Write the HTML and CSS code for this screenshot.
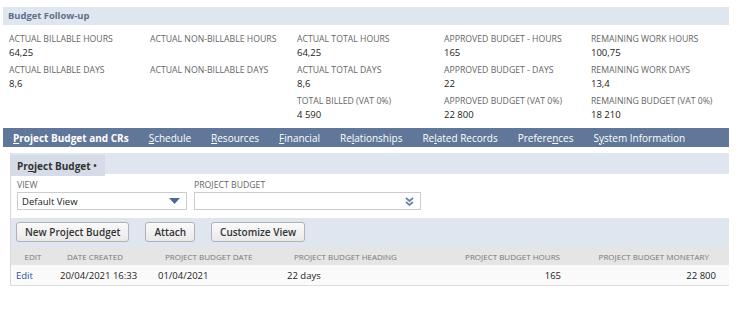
FILE: index.html
```html
<!DOCTYPE html>
<html lang="en">
<head>
  <meta charset="UTF-8" />
  <title>Project - Budget Follow-up</title>
  <link rel="stylesheet" href="styles.css">
</head>
<body>
  <div class="section-head">Budget Follow-up</div>

  <div class="fields">
    <div class="col first">
      <div class="field"><div class="label">Actual billable hours</div><div class="value">64,25</div></div>
      <div class="field"><div class="label">Actual billable days</div><div class="value">8,6</div></div>
    </div>
    <div class="col">
      <div class="field"><div class="label">Actual non-billable hours</div><div class="value">&nbsp;</div></div>
      <div class="field"><div class="label">Actual non-billable days</div><div class="value">&nbsp;</div></div>
    </div>
    <div class="col">
      <div class="field"><div class="label">Actual total hours</div><div class="value">64,25</div></div>
      <div class="field"><div class="label">Actual total days</div><div class="value">8,6</div></div>
      <div class="field"><div class="label">Total billed (VAT 0%)</div><div class="value">4 590</div></div>
    </div>
    <div class="col">
      <div class="field"><div class="label">Approved budget - hours</div><div class="value">165</div></div>
      <div class="field"><div class="label">Approved budget - days</div><div class="value">22</div></div>
      <div class="field"><div class="label">Approved budget (VAT 0%)</div><div class="value">22 800</div></div>
    </div>
    <div class="col">
      <div class="field"><div class="label">Remaining work hours</div><div class="value">100,75</div></div>
      <div class="field"><div class="label">Remaining work days</div><div class="value">13,4</div></div>
      <div class="field"><div class="label">Remaining budget (VAT 0%)</div><div class="value">18 210</div></div>
    </div>
  </div>

  <div class="tabs">
    <span class="tab active"><u>P</u>roject Budget and CRs</span>
    <span class="tab"><u>S</u>chedule</span>
    <span class="tab"><u>R</u>esources</span>
    <span class="tab"><u>F</u>inancial</span>
    <span class="tab">Re<u>l</u>ationships</span>
    <span class="tab">Re<u>l</u>ated Records</span>
    <span class="tab">Prefere<u>n</u>ces</span>
    <span class="tab">S<u>y</u>stem Information</span>
  </div>

  <div class="panel">
    <div class="subtabs">
      <span class="subtab">Pr<u>o</u>ject Budget <span class="dot">•</span></span>
    </div>
    <div class="filters">
      <div class="filter">
        <div class="label">View</div>
        <div class="select view-select">
          <span>Default View</span>
          <svg width="11" height="6" viewBox="0 0 11 6"><path d="M0 0H11L5.5 6Z" fill="#4d6a95"/></svg>
        </div>
      </div>
      <div class="filter">
        <div class="label">Project Budget</div>
        <div class="select budget-select">
          <span></span>
          <svg width="9" height="9" viewBox="0 0 9 9"><path d="M1 1L4.5 4L8 1M1 5L4.5 8L8 5" fill="none" stroke="#6d84a8" stroke-width="1.8"/></svg>
        </div>
      </div>
    </div>
    <div class="buttons">
      <button>New Project Budget</button>
      <button>Attach</button>
      <button>Customize View</button>
    </div>
    <table class="list">
      <colgroup>
        <col style="width: 44px">
        <col style="width: 98px">
        <col style="width: 129px">
        <col style="width: 165px">
        <col style="width: 125px">
        <col style="width: 157px">
      </colgroup>
      <thead>
        <tr>
          <th class="c-edit">Edit</th>
          <th>Date created</th>
          <th>Project budget date</th>
          <th>Project budget heading</th>
          <th class="num">Project budget hours</th>
          <th class="num last">Project budget monetary</th>
        </tr>
      </thead>
      <tbody>
        <tr>
          <td><a href="#">Edit</a></td>
          <td>20/04/2021 16:33</td>
          <td>01/04/2021</td>
          <td>22 days</td>
          <td class="num">165</td>
          <td class="num last">22 800</td>
        </tr>
      </tbody>
    </table>
  </div>
</body>
</html>
```

FILE: styles.css
```css
body {
  margin: 0;
  padding: 7px 8px 0 3px;
  font-family: 'Open Sans', 'Liberation Sans', sans-serif;
  color: #222;
  background: #fff;
}
.section-head {
  background: #e0e6ef;
  color: #5d6f8c;
  font-weight: bold;
  font-size: 9.4px;
  height: 18px;
  line-height: 18px;
  padding-left: 5px;
}
.fields {
  display: flex;
  padding: 8px 0 0 6px;
}
.col {
  width: 147px;
  flex-shrink: 0;
}
.col.first {
  width: 141px;
}
.field {
  margin-bottom: 5px;
}
.label {
  font-size: 8.7px;
  text-transform: uppercase;
  color: #666;
  line-height: 13px;
  white-space: nowrap;
}
.value {
  font-size: 9.5px;
  line-height: 13px;
  color: #222;
}
.tabs {
  margin-top: 2px;
  background: #607799;
  height: 19px;
  display: flex;
  align-items: center;
  padding-left: 10px;
  overflow: hidden;
}
.tab {
  color: #fff;
  font-size: 10px;
  margin-right: 20px;
  white-space: nowrap;
}
.tab.active {
  font-weight: bold;
  position: relative;
}
.tab.active::after {
  content: '';
  position: absolute;
  left: 53px;
  top: 15px;
  border: 4px solid transparent;
  border-bottom-color: #fff;
  border-top: 0;
}
.panel {
  margin: 6px 0 0 7px;
  border-left: 1px solid #d9d9d9;
}
.subtabs {
  background: #e0e6ef;
  height: 21px;
}
.subtab {
  display: inline-block;
  background: #d5dce7;
  height: 21px;
  line-height: 21px;
  padding: 0 8px 0 6px;
  font-size: 10px;
  font-weight: bold;
  color: #333;
}
.dot {
  font-size: 9px;
  vertical-align: 1px;
}
.filters {
  display: flex;
  padding: 5px 0 8px 6px;
}
.filter {
  margin-right: 7px;
}
.select {
  border: 1px solid #ccc;
  height: 16px;
  display: flex;
  align-items: center;
  justify-content: space-between;
  padding: 0 6px 0 4px;
  font-size: 9.5px;
  background: #fff;
}
.view-select {
  width: 158px;
}
.budget-select {
  width: 215px;
}
.buttons {
  background: #e0e6ef;
  padding: 4px 0 5px 5px;
  display: flex;
  gap: 16px;
}
.buttons button {
  font-family: inherit;
  font-size: 10px;
  font-weight: 600;
  color: #333;
  background: linear-gradient(#fafafa, #e9e9e9);
  border: 1px solid #b2b2b2;
  border-radius: 3px;
  height: 20px;
  padding: 0 8px;
}
.list {
  width: 718px;
  table-layout: fixed;
  border-collapse: collapse;
  border-bottom: 1px solid #ddd;
}
.list th {
  background: #e5e5e5;
  color: #777;
  font-weight: normal;
  font-size: 8px;
  text-transform: uppercase;
  height: 18px;
  text-align: left;
  padding: 0 12px;
  white-space: nowrap;
}
.list td {
  background: #fafafa;
  font-size: 9.5px;
  height: 20px;
  padding: 0 5px;
  white-space: nowrap;
}
.list .num {
  text-align: right;
}
.list td.num {
  padding-right: 11px;
}
.list th.last {
  padding-right: 20px;
}
.list td.last {
  padding-right: 13px;
}
.list th.c-edit {
  text-align: center;
  padding: 0;
}
.list a {
  color: #255599;
  text-decoration: none;
}
```
